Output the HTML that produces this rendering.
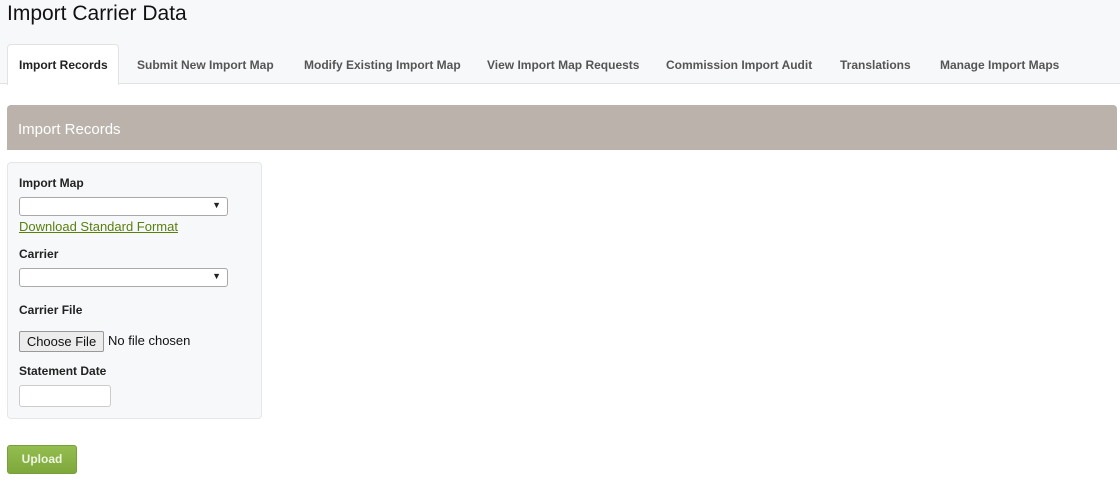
<!DOCTYPE html>
<html><head><style>
body{margin:0;width:1120px;height:481px;background:#fff;font-family:"Liberation Sans",sans-serif;position:relative;overflow:hidden}
.a{position:absolute;white-space:nowrap}
.top{position:absolute;left:0;top:0;width:1120px;height:83px;background:#f7f8fa;border-bottom:1px solid #e2e2e2}
.tab{position:absolute;top:58px;font-size:12px;font-weight:bold;color:#555}
.lbl{position:absolute;left:19px;font-size:12px;font-weight:bold;color:#222}
.sel{position:absolute;left:19px;width:207px;height:17px;border:1px solid #a9a9a9;border-radius:3px;background:#fff}
.sel:after{content:"▼";position:absolute;right:6px;top:2px;font-size:9px;color:#222}
</style></head><body>
<div class="top"></div>
<div class="a" style="left:7px;top:2px;font-size:21px;color:#111">Import Carrier Data</div>
<div class="a" style="left:7px;top:44px;width:110px;height:40px;background:#fff;border:1px solid #e2e2e2;border-bottom:none;border-radius:4px 4px 0 0"></div>
<div class="tab" style="left:19px;color:#222">Import Records</div>
<div class="tab" style="left:137px">Submit New Import Map</div>
<div class="tab" style="left:304px">Modify Existing Import Map</div>
<div class="tab" style="left:487px">View Import Map Requests</div>
<div class="tab" style="left:666px">Commission Import Audit</div>
<div class="tab" style="left:840px">Translations</div>
<div class="tab" style="left:940px">Manage Import Maps</div>
<div class="a" style="left:7px;top:105px;width:1110px;height:45px;background:#bab2ab;border-radius:4px 4px 0 0"></div>
<div class="a" style="left:18px;top:121px;font-size:15px;color:#fff">Import Records</div>
<div class="a" style="left:7px;top:162px;width:253px;height:255px;background:#f7f8fa;border:1px solid #e6e6e6;border-radius:4px"></div>
<div class="lbl" style="top:176px">Import Map</div>
<div class="sel" style="top:197px"></div>
<div class="a" style="left:19px;top:219px;font-size:13px;color:#5b7f0f;text-decoration:underline">Download Standard Format</div>
<div class="lbl" style="top:247px">Carrier</div>
<div class="sel" style="top:268px"></div>
<div class="lbl" style="top:303px">Carrier File</div>
<div class="a" style="left:19px;top:331px;width:83px;height:19px;border:1px solid #999;border-radius:2px;background:#ececec;font-size:13px;text-align:center;line-height:19px;color:#111">Choose File</div>
<div class="a" style="left:108px;top:333px;font-size:13px;color:#111">No file chosen</div>
<div class="lbl" style="top:364px">Statement Date</div>
<div class="a" style="left:19px;top:385px;width:90px;height:20px;border:1px solid #ccc;border-radius:3px;background:#fff"></div>
<div class="a" style="left:7px;top:445px;width:68px;height:27px;background:linear-gradient(#93bd4f,#7fa83c);border:1px solid #77a03a;border-radius:3px;color:#eef5e0;font-size:12px;font-weight:bold;text-align:center;line-height:27px">Upload</div>
</body></html>
